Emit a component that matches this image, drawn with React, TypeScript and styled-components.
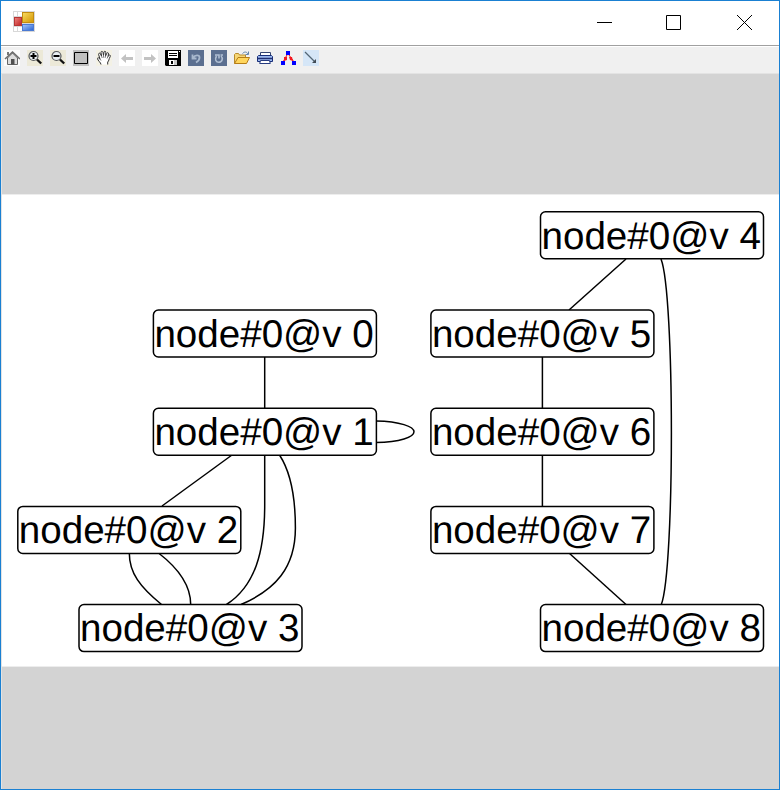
import React from 'react';
import styled, { createGlobalStyle } from 'styled-components';

const GlobalStyle = createGlobalStyle`
  * { box-sizing: border-box; }
  body { margin: 0; background: #fff; font-family: "Liberation Sans", Arial, sans-serif; }
  svg { display: block; }
`;

const WindowFrame = styled.div`
  width: 780px;
  height: 790px;
  display: flex;
  flex-direction: column;
  border: 1px solid #1a80d2;
  background: #fff;
  overflow: hidden;
`;

const TitleBar = styled.header`
  flex: none;
  height: 44px;
  display: flex;
  justify-content: space-between;
  padding: 10px 0 0 12px;
`;

const WindowControls = styled.div`
  display: flex;
  gap: 54px;
  padding: 4px 26px 0 0;
`;

const ControlButton = styled.button`
  display: block;
  width: 16px;
  height: 16px;
  padding: 0;
  border: 0;
  background: none;
  & + &:last-child { margin-left: 1px; }
`;

const Toolbar = styled.nav`
  flex: none;
  height: 29px;
  display: flex;
  gap: 7px;
  padding: 4px 3px 0;
  border-top: 1px solid #a0a0a0;
  border-bottom: 1px solid #e3e3e3;
  background: linear-gradient(#fff 1px, #f0f0f0 1px);
`;

const ToolButton = styled.button<{ $bg?: string }>`
  display: block;
  width: 16px;
  height: 16px;
  padding: 0;
  border: 0;
  background: ${(p) => p.$bg ?? 'transparent'};
`;

const Viewer = styled.main`
  flex: 1;
  padding-top: 120px;
  border-left: 1px solid #e3e3e3;
  background: #d3d3d3;
`;

const GraphSheet = styled.section`
  height: 473px;
  background: #fff;
  border-top: 1px solid #ededed;
  border-bottom: 1px solid #ededed;
`;

const Graph = styled.svg`
  width: 777px;
  height: 471px;
`;

const EdgePath = styled.path`
  fill: none;
  stroke: #000;
  stroke-width: 1.5px;
`;

const NodeBox = styled.rect`
  fill: #fff;
  stroke: #000;
  stroke-width: 1.5px;
`;

const NodeLabel = styled.text`
  font-family: "Liberation Sans", Arial, sans-serif;
  font-size: 38.6px;
  text-rendering: geometricPrecision;
  white-space: pre;
`;

const Icon = ({ children }: { children: React.ReactNode }) => (
  <svg width="16" height="16" viewBox="0 0 16 16">{children}</svg>
);

const AppLogo = () => (
  <svg width="22" height="21" viewBox="0 0 22 21">
    <defs>
      <linearGradient id="gold" x2="1" y2="1"><stop stopColor="#f9dc62" /><stop offset="1" stopColor="#d29400" /></linearGradient>
      <linearGradient id="red" x2="1" y2="1"><stop stopColor="#ee8580" /><stop offset="1" stopColor="#bd2020" /></linearGradient>
      <linearGradient id="blue" x2="1" y2="1"><stop stopColor="#a7c8fc" /><stop offset="1" stopColor="#2862d2" /></linearGradient>
    </defs>
    <rect width="22" height="21" fill="#d8d8d8" />
    <path d="M1 1h3v4H1zM5 1h4v4H5zM1 16h3v4H1zM5 16h4v4H5z" fill="#fff" />
    <rect x="1.5" y="6.5" width="7" height="8" fill="url(#red)" stroke="#b63535" />
    <rect x="9.5" y="1.5" width="11" height="10" fill="url(#gold)" stroke="#c28c10" />
    <rect x="9.5" y="13.5" width="11" height="6" fill="url(#blue)" stroke="#4a7ad3" />
  </svg>
);

const Magnifier = ({ plus }: { plus?: boolean }) => (
  <Icon>
    <circle cx="6.5" cy="6" r="4.5" fill="#e8eef0" stroke="#55585a" strokeWidth="1.2" />
    <path d="M10 9.5l4.2 4" stroke="#111" strokeWidth="2.4" />
    <path d={plus ? 'M3.5 6h6M6.5 3v6' : 'M3.5 6h6'} stroke="#000" strokeWidth="2" />
  </Icon>
);

const tools: { name: string; bg?: string; icon: React.ReactNode }[] = [
  { name: 'Home', bg: '#fcfcfc', icon: (
    <Icon>
      <path d="M3.5 8v6.5h10V8L8.5 3z" fill="#ddd" stroke="#666" />
      <path d="M1 9l7.5-7L16 9" fill="none" stroke="#6c6c6c" strokeWidth="1.6" />
      <path d="M3 2h2v3H3z" fill="#777" />
      <path d="M7 9h3.5v5.5H7z" fill="#505050" />
    </Icon>) },
  { name: 'Zoom in', bg: '#ece9d8', icon: <Magnifier plus /> },
  { name: 'Zoom out', bg: '#ece9d8', icon: <Magnifier /> },
  { name: 'Window zoom', bg: '#c0c0c0', icon: <Icon><path d="M1.5 2.5h13v11h-13z" fill="#c0c0c0" stroke="#000" /></Icon> },
  { name: 'Pan', bg: '#f3f1e5', icon: (
    <Icon>
      <path d="M5 14.5c0-2-3.5-4-3.5-6 0-1 1-1 2 .2L4 9 2.6 4.5C2.4 3 4 2.6 4.5 4l1 2L5 2.5C5 1 6.6 1 7 2.4l.5 3L8 2c.3-1.2 1.8-1 1.8.3l-.2 3.5 1.2-2.5c.5-1.2 2-.7 1.7.6L12 6.5l.7-1c.7-1 2-.4 1.6.8C13.6 8 13 9 12.5 11l-.8 1v2.5" fill="#fff" stroke="#333" strokeWidth="1" />
      <path d="M4 9l1 1.5M5.5 6l.7 2M7.5 5.4l.2 2.3M9.6 5.8l-.5 2M12 6.5l-1 2" stroke="#555" strokeWidth=".8" />
    </Icon>) },
  { name: 'Back', bg: '#fff', icon: <Icon><path d="M2 8.5L7 4v3h7v3H7v3z" fill="#c2c2c2" /></Icon> },
  { name: 'Forward', bg: '#fff', icon: <Icon><path d="M14 8.5L9 4v3H2v3h7v3z" fill="#c2c2c2" /></Icon> },
  { name: 'Save', icon: (
    <Icon>
      <path d="M0 0h16v16H1l-1-1z" fill="#000" />
      <path d="M3 1h10v7H3zM14 1h1v1h-1zM4 10h8v5H4z" fill="#fff" />
      <path d="M4 3h8v1H4zM4 5h8v1H4zM6 11h2v3H6z" fill="#000" />
      <path d="M9 10h3v5H9z" fill="#c8c8c8" />
    </Icon>) },
  { name: 'Undo', bg: '#5b6f90', icon: (
    <Icon>
      <path d="M4.5 4.5v4h4M5 8C7 4.5 11.5 4.5 11.5 7.5c0 2.5-1.5 3.8-3.5 5" fill="none" stroke="#a8b8ce" strokeWidth="1.8" />
    </Icon>) },
  { name: 'Redo', bg: '#5b6f90', icon: (
    <Icon>
      <path d="M5.5 6c-2 3.5-.5 6.3 2.3 6.3 3.3 0 4.7-4 2.2-6.3M4 5h4v3.5M9.5 5H12" fill="none" stroke="#b0bfd3" strokeWidth="1.6" />
    </Icon>) },
  { name: 'Open', icon: (
    <Icon>
      <path d="M.5 13.5v-9l1-1h3l1 1.5h6v3" fill="#f6d675" stroke="#b78a2c" />
      <path d="M.5 13.5l3.5-6h11.5l-3 6z" fill="#ffd65d" stroke="#b67d16" />
      <path d="M8.5 3.5c2-2 4-2 5.5.5M14.5 1.5v3h-3" fill="none" stroke="#6385a9" />
    </Icon>) },
  { name: 'Print', icon: (
    <Icon>
      <path d="M3.5 6V2.5h10V6" fill="#fff" stroke="#34446f" />
      <path d="M.5 6.5l1-1h13l1 1v5H.5z" fill="#9cb9ee" stroke="#172d78" />
      <path d="M0 8.5h16" stroke="#202f72" strokeWidth="1.5" />
      <path d="M3.5 10.5h9l.8 3H2.7z" fill="#fff" stroke="#263c80" />
    </Icon>) },
  { name: 'Layout', icon: (
    <Icon>
      <path d="M7 5L3 12M9 5l5 7" stroke="#f00" strokeWidth="1" />
      <path d="M4 7l3 0 0 3-3 1zM9 7h3l1 4-3-1z" fill="#f31820" />
      <path d="M6 1h4v4H6zM1 11h4v4H1zM12 11h4v4h-4z" fill="#00f" />
    </Icon>) },
  { name: 'Insert edge', bg: '#d5e6f7', icon: (
    <Icon><path d="M2 2l10 10" stroke="#526575" strokeWidth="1.2" /><path d="M13 13H9l4-4z" fill="#414b54" /></Icon>) },
];

const nodes = [
  { id: 0, cx: 264.9, row: 1 },
  { id: 1, cx: 264.9, row: 2 },
  { id: 2, cx: 129.3, row: 3 },
  { id: 3, cx: 190.5, row: 4 },
  { id: 4, cx: 652, row: 0 },
  { id: 5, cx: 542.4, row: 1 },
  { id: 6, cx: 542.4, row: 2 },
  { id: 7, cx: 542.4, row: 3 },
  { id: 8, cx: 652, row: 4 },
];

const edges = [
  'M264.7 357V408',
  'M376 421C400 421.5 414 426.5 414 431.8S400 442 376 442.5',
  'M232 455L162 506',
  'M264.7 455V505C264.7 552 255 586 226.5 604.5',
  'M279.5 455C290 471 295.4 496 295.4 528C295.4 568 275 590 241 604.5',
  'M129.3 553C129.3 573 140 587 161.5 604.5',
  'M158.5 553C178 568 190.7 584 190.7 604.5',
  'M626 259L569 310',
  'M542.4 357V408',
  'M542.4 455V506',
  'M569 553L626 604.5',
  'M661 259C674.8 294 674.8 569 661.3 604.5',
];

export default function App() {
  return (
    <>
      <GlobalStyle />
      <WindowFrame>
        <TitleBar>
          <AppLogo />
          <WindowControls>
            <ControlButton aria-label="Minimize"><Icon><path d="M1 7.5h15" stroke="#000" /></Icon></ControlButton>
            <ControlButton aria-label="Maximize"><Icon><path d="M.5.5h14v14H.5z" fill="none" stroke="#000" /></Icon></ControlButton>
            <ControlButton aria-label="Close"><Icon><path d="M0 0l15 15M15 0L0 15" stroke="#000" /></Icon></ControlButton>
          </WindowControls>
        </TitleBar>
        <Toolbar>
          {tools.map((t) => (
            <ToolButton key={t.name} aria-label={t.name} $bg={t.bg}>{t.icon}</ToolButton>
          ))}
        </Toolbar>
        <Viewer>
          <GraphSheet>
            <Graph viewBox="2 195 777 471">
              {edges.map((d) => <EdgePath key={d} d={d} />)}
              {nodes.map(({ id, cx, row }) => {
                const top = 211.8 + row * 98.2;
                return (
                  <g key={id}>
                    <NodeBox x={cx - 111.5} y={top} width={223} height={47} rx={5} />
                    <NodeLabel x={cx - 110.5} y={top + 36.7}>{`node#0@v ${id}`}</NodeLabel>
                  </g>
                );
              })}
            </Graph>
          </GraphSheet>
        </Viewer>
      </WindowFrame>
    </>
  );
}
